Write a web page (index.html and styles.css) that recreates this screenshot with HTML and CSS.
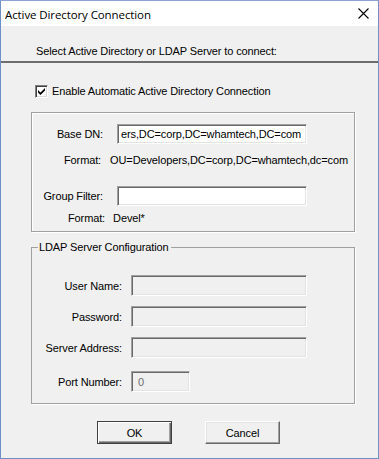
FILE: index.html
```html
<!DOCTYPE html>
<html lang="en">
<head>
    <meta charset="UTF-8">
    <title>Active Directory Connection</title>
    <link rel="stylesheet" href="styles.css">
</head>
<body>
    <div class="window">
        <div class="title-bar">
            <span class="title">Active Directory Connection</span>
            <svg class="close" width="11" height="11" viewBox="0 0 11 11">
                <path d="M0.5 0.5 L10.5 10.5 M10.5 0.5 L0.5 10.5" stroke="#000" stroke-width="1.1" fill="none"/>
            </svg>
        </div>
        <div class="header">Select Active Directory or LDAP Server to connect:</div>
        <div class="separator"></div>

        <div class="content">
            <label class="check-row">
                <span class="checkbox">
                    <svg width="9" height="9" viewBox="0 0 9 9">
                        <path d="M1 3 L3.5 5.5 L8 1 L8 3.5 L3.5 8 L1 5.5 Z" fill="#000"/>
                    </svg>
                </span>
                Enable Automatic Active Directory Connection
            </label>

            <div class="group">
                <div class="row">
                    <span class="label label-ad">Base DN:</span>
                    <div class="input input-dn"><span>ers,DC=corp,DC=whamtech,DC=com</span></div>
                </div>
                <div class="format format-dn">
                    <span>Format:</span>
                    <span>OU=Developers,DC=corp,DC=whamtech,dc=com</span>
                </div>
                <div class="row row-filter">
                    <span class="label label-ad">Group Filter:</span>
                    <div class="input input-dn"></div>
                </div>
                <div class="format format-filter">
                    <span>Format:</span>
                    <span>Devel*</span>
                </div>
            </div>

            <fieldset class="ldap">
                <legend>LDAP Server Configuration</legend>
                <div class="row">
                    <span class="label label-ldap">User Name:</span>
                    <div class="input input-off input-wide"></div>
                </div>
                <div class="row">
                    <span class="label label-ldap">Password:</span>
                    <div class="input input-off input-wide"></div>
                </div>
                <div class="row">
                    <span class="label label-ldap">Server Address:</span>
                    <div class="input input-off input-wide"></div>
                </div>
                <div class="row row-port">
                    <span class="label label-ldap">Port Number:</span>
                    <div class="input input-off input-port">0</div>
                </div>
            </fieldset>

            <div class="buttons">
                <button class="button button-default">OK</button>
                <button class="button">Cancel</button>
            </div>
        </div>
    </div>
</body>
</html>
```

FILE: styles.css
```css
html, body {
    margin: 0;
    padding: 0;
    background-color: #f0f0f0;
}
.window {
    width: 379px;
    height: 459px;
    box-sizing: border-box;
    border: 1px solid #6e8fc8;
    border-top-color: #8aa4d4;
    background-color: #f0f0f0;
    font-family: "Liberation Sans", Arial, sans-serif;
    font-size: 11px;
    letter-spacing: -0.12px;
    color: #000;
    display: flex;
    flex-direction: column;
}
.title-bar {
    height: 25px;
    background-color: #fff;
    display: flex;
    align-items: center;
    justify-content: space-between;
    padding: 0 8px 0 4px;
}
.title {
    font-family: "Open Sans", "Noto Sans", sans-serif;
    font-size: 11.5px;
    letter-spacing: -0.1px;
    padding-top: 1px;
}
.close {
    margin-right: 1px;
}
.header {
    height: 35px;
    box-sizing: border-box;
    padding: 18px 0 0 35px;
    line-height: 14px;
}
.separator {
    height: 2px;
    background-color: #6d6d6d;
}
.content {
    padding: 0 23px 0 30px;
}
.check-row {
    display: flex;
    align-items: center;
    gap: 4px;
    margin: 21px 0 0 4px;
    height: 14px;
}
.checkbox {
    width: 13px;
    height: 13px;
    box-sizing: border-box;
    border: 1px solid;
    border-color: #808080 #fff #fff #808080;
    box-shadow: inset 1px 1px 0 #404040, inset -1px -1px 0 #dcdcdc;
    background-color: #fff;
    display: flex;
    align-items: center;
    justify-content: center;
}
.group {
    margin-top: 14px;
    border: 1px solid #a0a0a0;
    box-shadow: 1px 1px 0 #fff, inset 1px 1px 0 #fff;
    padding: 11px 0 7px 0;
    height: 120px;
    box-sizing: border-box;
}
.row {
    display: flex;
    align-items: center;
}
.label {
    text-align: right;
    flex: none;
}
.label-ad {
    width: 71px;
    margin-right: 14px;
}
.label-ldap {
    width: 90px;
    margin-right: 9px;
}
.input {
    box-sizing: border-box;
    border: 1px solid;
    border-color: #a0a0a0 #fff #fff #a0a0a0;
    box-shadow: inset 1px 1px 0 #696969, inset -1px -1px 0 #e3e3e3;
    background-color: #fff;
    display: flex;
    align-items: center;
    overflow: hidden;
    white-space: nowrap;
}
.input-dn {
    width: 190px;
    height: 20px;
    padding: 0 4px 0 3px;
}
.input-off {
    background-color: #f0f0f0;
    height: 21px;
    color: #6d6d6d;
    padding-left: 6px;
}
.input-wide {
    width: 176px;
}
.input-port {
    width: 59px;
}
.format {
    display: flex;
    line-height: 14px;
}
.format-dn {
    margin-top: 9px;
    padding-left: 32px;
    gap: 9px;
}
.row-filter {
    margin-top: 19px;
}
.format-filter {
    margin-top: 5px;
    padding-left: 36px;
    gap: 8px;
}
.ldap {
    margin: 8px 0 0 0;
    padding: 21px 0 11px 0;
    border: 1px solid #a0a0a0;
    box-shadow: 1px 1px 0 #fff;
    min-width: 0;
    display: flex;
    flex-direction: column;
    gap: 10px;
}
.ldap legend {
    padding: 0 3px 0 1px;
    margin-left: 6px;
    line-height: 14px;
    background-color: #f0f0f0;
}
.row-port {
    margin-top: 3px;
}
.buttons {
    display: flex;
    justify-content: center;
    gap: 33px;
    margin: 17px 0 0 -9px;
}
.button {
    width: 75px;
    height: 23px;
    box-sizing: border-box;
    font-family: inherit;
    font-size: 11px;
    letter-spacing: inherit;
    color: #000;
    background-color: #f0f0f0;
    border: 1px solid;
    border-color: #fff #696969 #696969 #fff;
    box-shadow: inset -1px -1px 0 #a0a0a0, inset 1px 1px 0 #e3e3e3;
    padding: 0;
}
.button-default {
    border-color: #404040;
    box-shadow: inset 1px 1px 0 #fff, inset -1px -1px 0 #696969, inset -2px -2px 0 #a0a0a0;
}
```
